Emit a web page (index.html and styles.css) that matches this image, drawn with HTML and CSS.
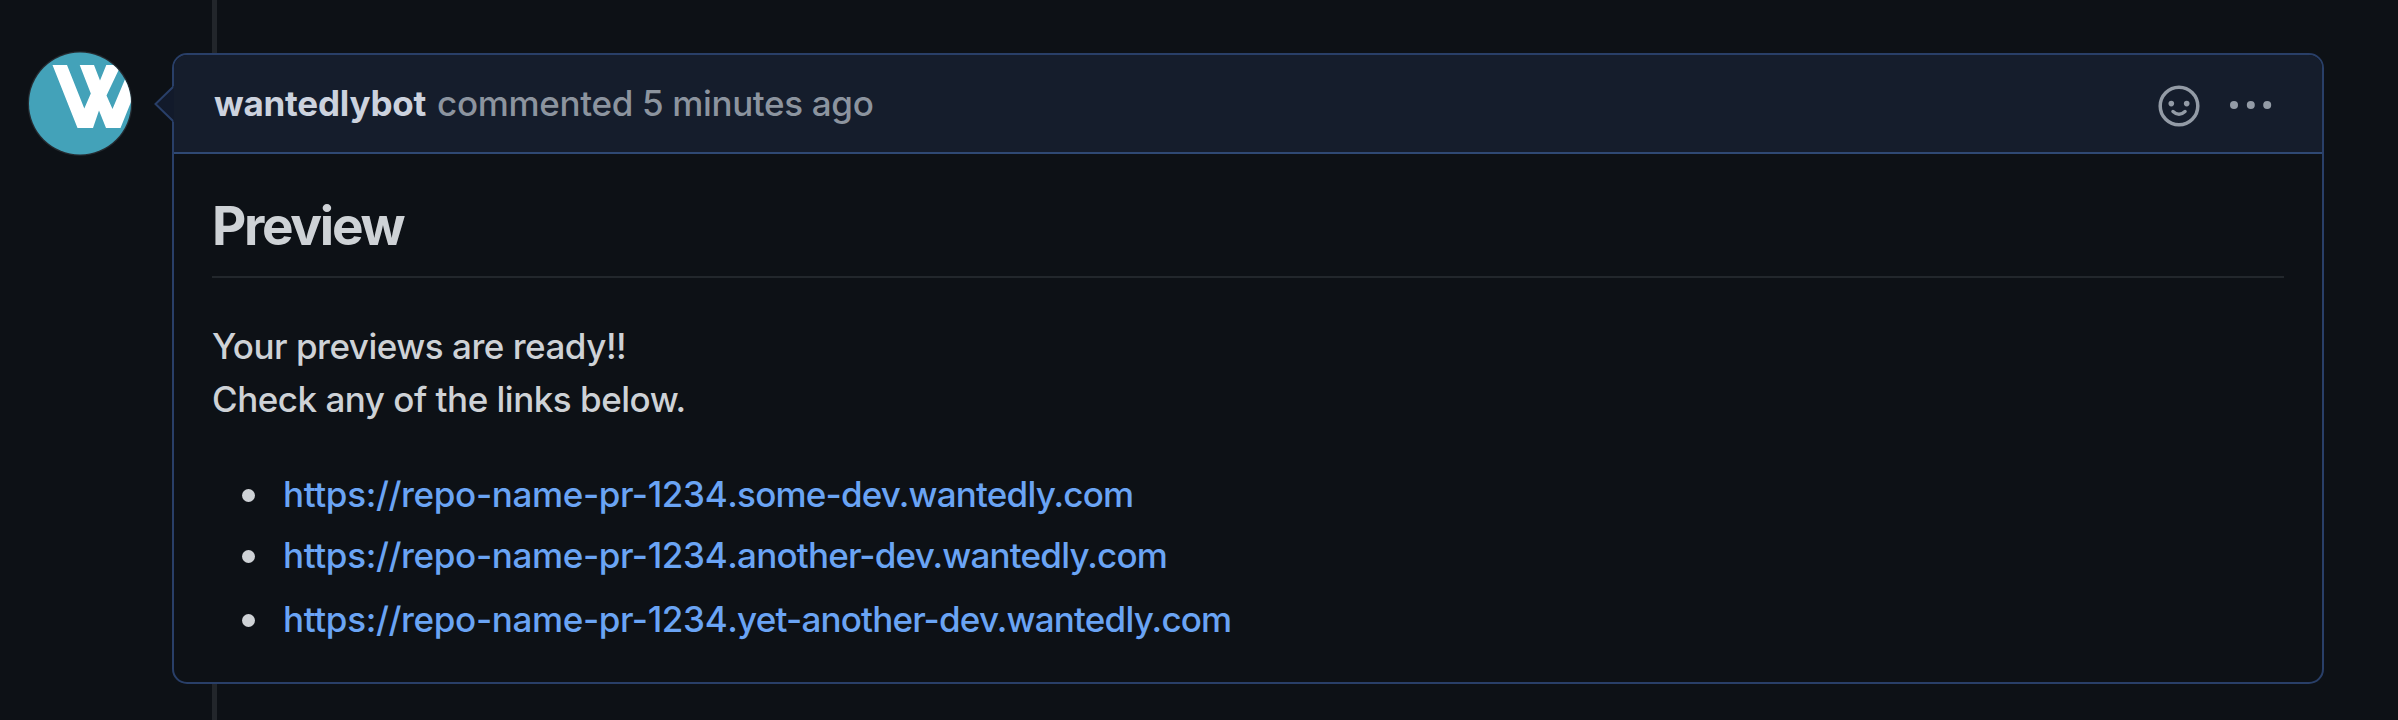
FILE: index.html
```html
<!DOCTYPE html>
<html lang="en">
<head>
<meta charset="utf-8">
<title>Preview comment</title>
<link rel="stylesheet" href="styles.css">
</head>
<body>
<main class="timeline">
  <svg class="avatar" viewBox="0 0 106 106" role="img" aria-label="wantedlybot">
    <defs><clipPath id="disc"><circle cx="53" cy="53.5" r="51"/></clipPath></defs>
    <circle cx="53" cy="53.5" r="52.3" fill="#252b31"/>
    <circle cx="53" cy="53.5" r="51" fill="#43a2b9"/>
    <g clip-path="url(#disc)" fill="#fff">
      <path d="M25.5 15H40L57.3 58.5L63.8 43.5L52.7 15H67L73 30.5L79.3 15H94L79.5 45.5L85.5 59L104 15H119L93.5 78H79L72 60.5L66 78H50.5Z"/>
    </g>
  </svg>
  <article class="comment">
    <header class="comment-header">
      <svg class="caret" viewBox="0 0 20 36"><path class="caret-fill" d="M20 0L1.5 18L20 36Z"/><path class="caret-line" d="M19 1L1.5 18L19 35"/></svg>
      <p class="meta"><strong class="author">wantedlybot</strong><span class="when">commented 5 minutes ago</span></p>
      <div class="actions">
        <svg class="smiley" viewBox="0 0 42 42"><circle cx="21" cy="21" r="18.8"/><path d="M15 26.5Q21 32 27 26.5"/><circle class="dot" cx="13.3" cy="18.6" r="2.8"/><circle class="dot" cx="28.7" cy="18.6" r="2.8"/></svg>
        <svg class="kebab" viewBox="0 0 42 8"><circle cx="4" cy="4" r="4"/><circle cx="20.8" cy="4" r="4"/><circle cx="37.2" cy="4" r="4"/></svg>
      </div>
    </header>
    <div class="comment-body">
      <h2 class="title">Preview</h2>
      <p class="text">Your previews are ready!!<br>Check any of the links below.</p>
      <ul class="links">
        <li><a href="#">https://repo-name-pr-1234<span class="host">.some-dev.wantedly.com</span></a></li>
        <li><a href="#">https://repo-name-pr-1234<span class="host">.another-dev.wantedly.com</span></a></li>
        <li><a href="#">https://repo-name-pr-1234<span class="host">.yet-another-dev.wantedly.com</span></a></li>
      </ul>
    </div>
  </article>
</main>
</body>
</html>
```
FILE: styles.css
```css
* { box-sizing: border-box; }
body {
  margin: 0;
  background: #0d1116;
  color: #ced2d6;
  font-family: Inter, "Liberation Sans", sans-serif;
  font-size: 35px;
  font-weight: 450;
}
p, h2, ul { margin: 0; padding: 0; }
.timeline {
  display: flex;
  align-items: flex-start;
  height: 720px;
  padding: 50px 74px 0 27px;
  background: linear-gradient(#22262b, #22262b) 212px 0 / 5px 100% no-repeat;
}
.avatar { flex: none; width: 106px; height: 106px; margin-right: 39px; }
.comment {
  flex: 1;
  height: 631px;
  margin-top: 3px;
  border: 2px solid #293f68;
  border-radius: 15px;
  background: #0d1116;
}
.comment-header {
  position: relative;
  display: flex;
  align-items: center;
  justify-content: space-between;
  height: 99px;
  padding: 0 50px 0 40px;
  border-bottom: 2px solid #2f4974;
  border-radius: 13px 13px 0 0;
  background: #151d2c;
}
.caret { position: absolute; left: -20px; top: 31px; width: 20px; height: 36px; }
.caret-fill { fill: #121a2b; }
.caret-line { fill: none; stroke: #293f68; stroke-width: 2; }
.meta { display: flex; gap: 11px; margin-top: -1px; line-height: 48px; letter-spacing: -0.34px; color: #8c949f; }
.author { font-weight: 700; letter-spacing: -0.22px; color: #ccd2de; }
.actions { display: flex; align-items: center; gap: 30px; }
.smiley { width: 42px; height: 42px; margin-top: 4px; fill: none; stroke: #939ba6; stroke-width: 3.5; stroke-linecap: round; }
.smiley .dot { fill: #939ba6; stroke: none; }
.kebab { width: 42px; height: 8px; margin-top: 2px; fill: #939ba6; }
.comment-body { padding: 38px 38px 0; }
.title {
  height: 86px;
  font-size: 53px;
  font-weight: 700;
  line-height: 68px;
  letter-spacing: -2.3px;
  border-bottom: 2px solid #22272c;
}
.text { margin-top: 42px; line-height: 53px; letter-spacing: -0.49px; }
.links { margin-top: 37px; list-style: none; letter-spacing: -0.35px; }
.links li { display: flex; align-items: center; height: 61px; }
.links li:last-child { margin-top: 3px; }
.links li::before {
  content: "";
  width: 13px;
  height: 13px;
  margin: 3px 28px 0 30px;
  border-radius: 50%;
  background: #ced2d6;
}
.links a { color: #6aa4f4; text-decoration: none; }
.host { letter-spacing: -0.8px; }
```
